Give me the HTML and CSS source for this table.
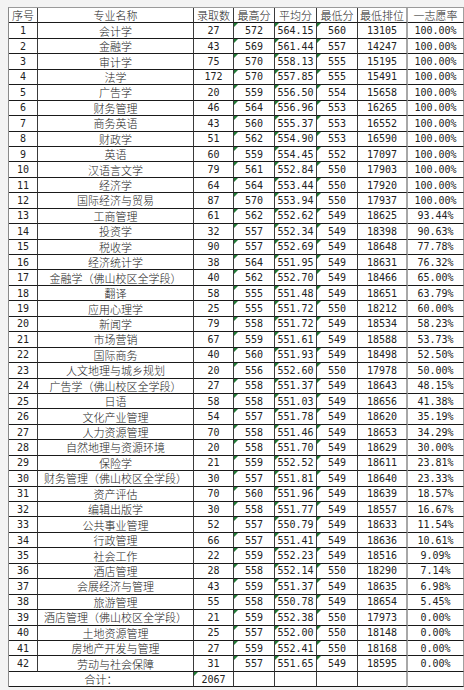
FILE: index.html
```html
<!DOCTYPE html>
<html lang="zh-CN">
<head>
<meta charset="utf-8">
<link rel="stylesheet" href="styles.css">
</head>
<body>
<div class="sheet">
<div class="c h">序号</div><div class="c h">专业名称</div><div class="c h">录取数</div><div class="c h">最高分</div><div class="c h">平均分</div><div class="c h">最低分</div><div class="c h g">最低排位</div><div class="c h e">一志愿率</div>
<div class="c">1</div><div class="c n">会计学</div><div class="c">27</div><div class="c t">572</div><div class="c t">564.15</div><div class="c t">560</div><div class="c g">13105</div><div class="c e">100.00%</div>
<div class="c">2</div><div class="c n">金融学</div><div class="c">43</div><div class="c t">569</div><div class="c t">561.44</div><div class="c t">557</div><div class="c g">14247</div><div class="c e">100.00%</div>
<div class="c">3</div><div class="c n">审计学</div><div class="c">75</div><div class="c t">570</div><div class="c t">558.13</div><div class="c t">555</div><div class="c g">15195</div><div class="c e">100.00%</div>
<div class="c">4</div><div class="c n">法学</div><div class="c">172</div><div class="c t">570</div><div class="c t">557.85</div><div class="c t">555</div><div class="c g">15491</div><div class="c e">100.00%</div>
<div class="c">5</div><div class="c n">广告学</div><div class="c">20</div><div class="c t">559</div><div class="c t">556.50</div><div class="c t">554</div><div class="c g">15658</div><div class="c e">100.00%</div>
<div class="c">6</div><div class="c n">财务管理</div><div class="c">46</div><div class="c t">564</div><div class="c t">556.96</div><div class="c t">553</div><div class="c g">16265</div><div class="c e">100.00%</div>
<div class="c">7</div><div class="c n">商务英语</div><div class="c">43</div><div class="c t">560</div><div class="c t">555.37</div><div class="c t">553</div><div class="c g">16552</div><div class="c e">100.00%</div>
<div class="c">8</div><div class="c n">财政学</div><div class="c">51</div><div class="c t">562</div><div class="c t">554.90</div><div class="c t">553</div><div class="c g">16590</div><div class="c e">100.00%</div>
<div class="c">9</div><div class="c n">英语</div><div class="c">60</div><div class="c t">559</div><div class="c t">554.45</div><div class="c t">552</div><div class="c g">17097</div><div class="c e">100.00%</div>
<div class="c">10</div><div class="c n">汉语言文学</div><div class="c">79</div><div class="c t">561</div><div class="c t">552.84</div><div class="c t">550</div><div class="c g">17903</div><div class="c e">100.00%</div>
<div class="c">11</div><div class="c n">经济学</div><div class="c">64</div><div class="c t">564</div><div class="c t">553.44</div><div class="c t">550</div><div class="c g">17920</div><div class="c e">100.00%</div>
<div class="c">12</div><div class="c n">国际经济与贸易</div><div class="c">87</div><div class="c t">570</div><div class="c t">553.94</div><div class="c t">550</div><div class="c g">17937</div><div class="c e">100.00%</div>
<div class="c">13</div><div class="c n">工商管理</div><div class="c">61</div><div class="c t">562</div><div class="c t">552.62</div><div class="c t">549</div><div class="c g">18625</div><div class="c e">93.44%</div>
<div class="c">14</div><div class="c n">投资学</div><div class="c">32</div><div class="c t">557</div><div class="c t">552.34</div><div class="c t">549</div><div class="c g">18398</div><div class="c e">90.63%</div>
<div class="c">15</div><div class="c n">税收学</div><div class="c">90</div><div class="c t">557</div><div class="c t">552.69</div><div class="c t">549</div><div class="c g">18648</div><div class="c e">77.78%</div>
<div class="c">16</div><div class="c n">经济统计学</div><div class="c">38</div><div class="c t">564</div><div class="c t">551.95</div><div class="c t">549</div><div class="c g">18631</div><div class="c e">76.32%</div>
<div class="c">17</div><div class="c n">金融学（佛山校区全学段）</div><div class="c">40</div><div class="c t">562</div><div class="c t">552.70</div><div class="c t">549</div><div class="c g">18466</div><div class="c e">65.00%</div>
<div class="c">18</div><div class="c n">翻译</div><div class="c">58</div><div class="c t">555</div><div class="c t">551.48</div><div class="c t">549</div><div class="c g">18651</div><div class="c e">63.79%</div>
<div class="c">19</div><div class="c n">应用心理学</div><div class="c">25</div><div class="c t">555</div><div class="c t">551.72</div><div class="c t">550</div><div class="c g">18212</div><div class="c e">60.00%</div>
<div class="c">20</div><div class="c n">新闻学</div><div class="c">79</div><div class="c t">558</div><div class="c t">551.72</div><div class="c t">549</div><div class="c g">18534</div><div class="c e">58.23%</div>
<div class="c">21</div><div class="c n">市场营销</div><div class="c">67</div><div class="c t">559</div><div class="c t">551.61</div><div class="c t">549</div><div class="c g">18588</div><div class="c e">53.73%</div>
<div class="c">22</div><div class="c n">国际商务</div><div class="c">40</div><div class="c t">560</div><div class="c t">551.93</div><div class="c t">549</div><div class="c g">18498</div><div class="c e">52.50%</div>
<div class="c">23</div><div class="c n">人文地理与城乡规划</div><div class="c">20</div><div class="c t">556</div><div class="c t">552.60</div><div class="c t">550</div><div class="c g">17978</div><div class="c e">50.00%</div>
<div class="c">24</div><div class="c n">广告学（佛山校区全学段）</div><div class="c">27</div><div class="c t">558</div><div class="c t">551.37</div><div class="c t">549</div><div class="c g">18643</div><div class="c e">48.15%</div>
<div class="c">25</div><div class="c n">日语</div><div class="c">58</div><div class="c t">558</div><div class="c t">551.03</div><div class="c t">549</div><div class="c g">18656</div><div class="c e">41.38%</div>
<div class="c">26</div><div class="c n">文化产业管理</div><div class="c">54</div><div class="c t">557</div><div class="c t">551.78</div><div class="c t">549</div><div class="c g">18620</div><div class="c e">35.19%</div>
<div class="c">27</div><div class="c n">人力资源管理</div><div class="c">70</div><div class="c t">558</div><div class="c t">551.46</div><div class="c t">549</div><div class="c g">18653</div><div class="c e">34.29%</div>
<div class="c">28</div><div class="c n">自然地理与资源环境</div><div class="c">20</div><div class="c t">558</div><div class="c t">551.70</div><div class="c t">549</div><div class="c g">18629</div><div class="c e">30.00%</div>
<div class="c">29</div><div class="c n">保险学</div><div class="c">21</div><div class="c t">559</div><div class="c t">552.52</div><div class="c t">549</div><div class="c g">18611</div><div class="c e">23.81%</div>
<div class="c">30</div><div class="c n">财务管理（佛山校区全学段）</div><div class="c">30</div><div class="c t">557</div><div class="c t">551.81</div><div class="c t">549</div><div class="c g">18640</div><div class="c e">23.33%</div>
<div class="c">31</div><div class="c n">资产评估</div><div class="c">70</div><div class="c t">560</div><div class="c t">551.96</div><div class="c t">549</div><div class="c g">18639</div><div class="c e">18.57%</div>
<div class="c">32</div><div class="c n">编辑出版学</div><div class="c">30</div><div class="c t">558</div><div class="c t">551.77</div><div class="c t">549</div><div class="c g">18557</div><div class="c e">16.67%</div>
<div class="c">33</div><div class="c n">公共事业管理</div><div class="c">52</div><div class="c t">557</div><div class="c t">550.79</div><div class="c t">549</div><div class="c g">18633</div><div class="c e">11.54%</div>
<div class="c">34</div><div class="c n">行政管理</div><div class="c">66</div><div class="c t">557</div><div class="c t">551.41</div><div class="c t">549</div><div class="c g">18636</div><div class="c e">10.61%</div>
<div class="c">35</div><div class="c n">社会工作</div><div class="c">22</div><div class="c t">559</div><div class="c t">552.23</div><div class="c t">549</div><div class="c g">18516</div><div class="c e">9.09%</div>
<div class="c">36</div><div class="c n">酒店管理</div><div class="c">28</div><div class="c t">558</div><div class="c t">552.14</div><div class="c t">550</div><div class="c g">18290</div><div class="c e">7.14%</div>
<div class="c">37</div><div class="c n">会展经济与管理</div><div class="c">43</div><div class="c t">559</div><div class="c t">551.37</div><div class="c t">549</div><div class="c g">18635</div><div class="c e">6.98%</div>
<div class="c">38</div><div class="c n">旅游管理</div><div class="c">55</div><div class="c t">558</div><div class="c t">550.78</div><div class="c t">549</div><div class="c g">18654</div><div class="c e">5.45%</div>
<div class="c">39</div><div class="c n">酒店管理（佛山校区全学段）</div><div class="c">21</div><div class="c t">559</div><div class="c t">552.38</div><div class="c t">550</div><div class="c g">17973</div><div class="c e">0.00%</div>
<div class="c">40</div><div class="c n">土地资源管理</div><div class="c">25</div><div class="c t">557</div><div class="c t">552.00</div><div class="c t">550</div><div class="c g">18148</div><div class="c e">0.00%</div>
<div class="c">41</div><div class="c n">房地产开发与管理</div><div class="c">27</div><div class="c t">559</div><div class="c t">552.41</div><div class="c t">550</div><div class="c g">18168</div><div class="c e">0.00%</div>
<div class="c">42</div><div class="c n">劳动与社会保障</div><div class="c">31</div><div class="c t">557</div><div class="c t">551.65</div><div class="c t">549</div><div class="c g">18595</div><div class="c e">0.00%</div>
<div class="c n span2">合计：</div><div class="c t">2067</div><div class="c"></div><div class="c"></div><div class="c"></div><div class="c g"></div><div class="c e"></div>
</div>
</body>
</html>
```

FILE: styles.css
```css
html, body {
  margin: 0;
  padding: 0;
  background: #f3f3f3;
}

body {
  padding: 7px 0 0 8px;
}

.sheet {
  display: grid;
  grid-template-columns: 29px 156px 40px 41px 42px 41px 50px 56px;
  grid-template-rows: repeat(44, 15.45px);
  width: 455px;
  background: #ffffff;
  border-top: 1px solid #9a9a9a;
  border-left: 1px solid #8a8a8a;
  font-family: "DejaVu Sans Mono", "Noto Sans CJK SC", monospace;
  font-size: 10px;
  color: #222222;
}

.c {
  position: relative;
  box-sizing: border-box;
  display: flex;
  align-items: center;
  justify-content: center;
  padding-top: 1px;
  border-right: 1px solid #3a3a3a;
  border-bottom: 1px solid #1a1a1a;
  white-space: nowrap;
  overflow: hidden;
  line-height: 1;
}

.c.h,
.c.n {
  font-family: "Noto Sans CJK SC", sans-serif;
  font-size: 11px;
  font-weight: 300;
}

.c.g {
  border-right: 2px solid #a8a8a8;
}

.c.e {
  border-right: 1px solid #a0a0a0;
}

.span2 {
  grid-column: span 2;
}

.t::before {
  content: "";
  position: absolute;
  left: 0;
  top: 0;
  width: 0;
  height: 0;
  border-top: 4px solid #217a36;
  border-right: 4px solid transparent;
}
```
